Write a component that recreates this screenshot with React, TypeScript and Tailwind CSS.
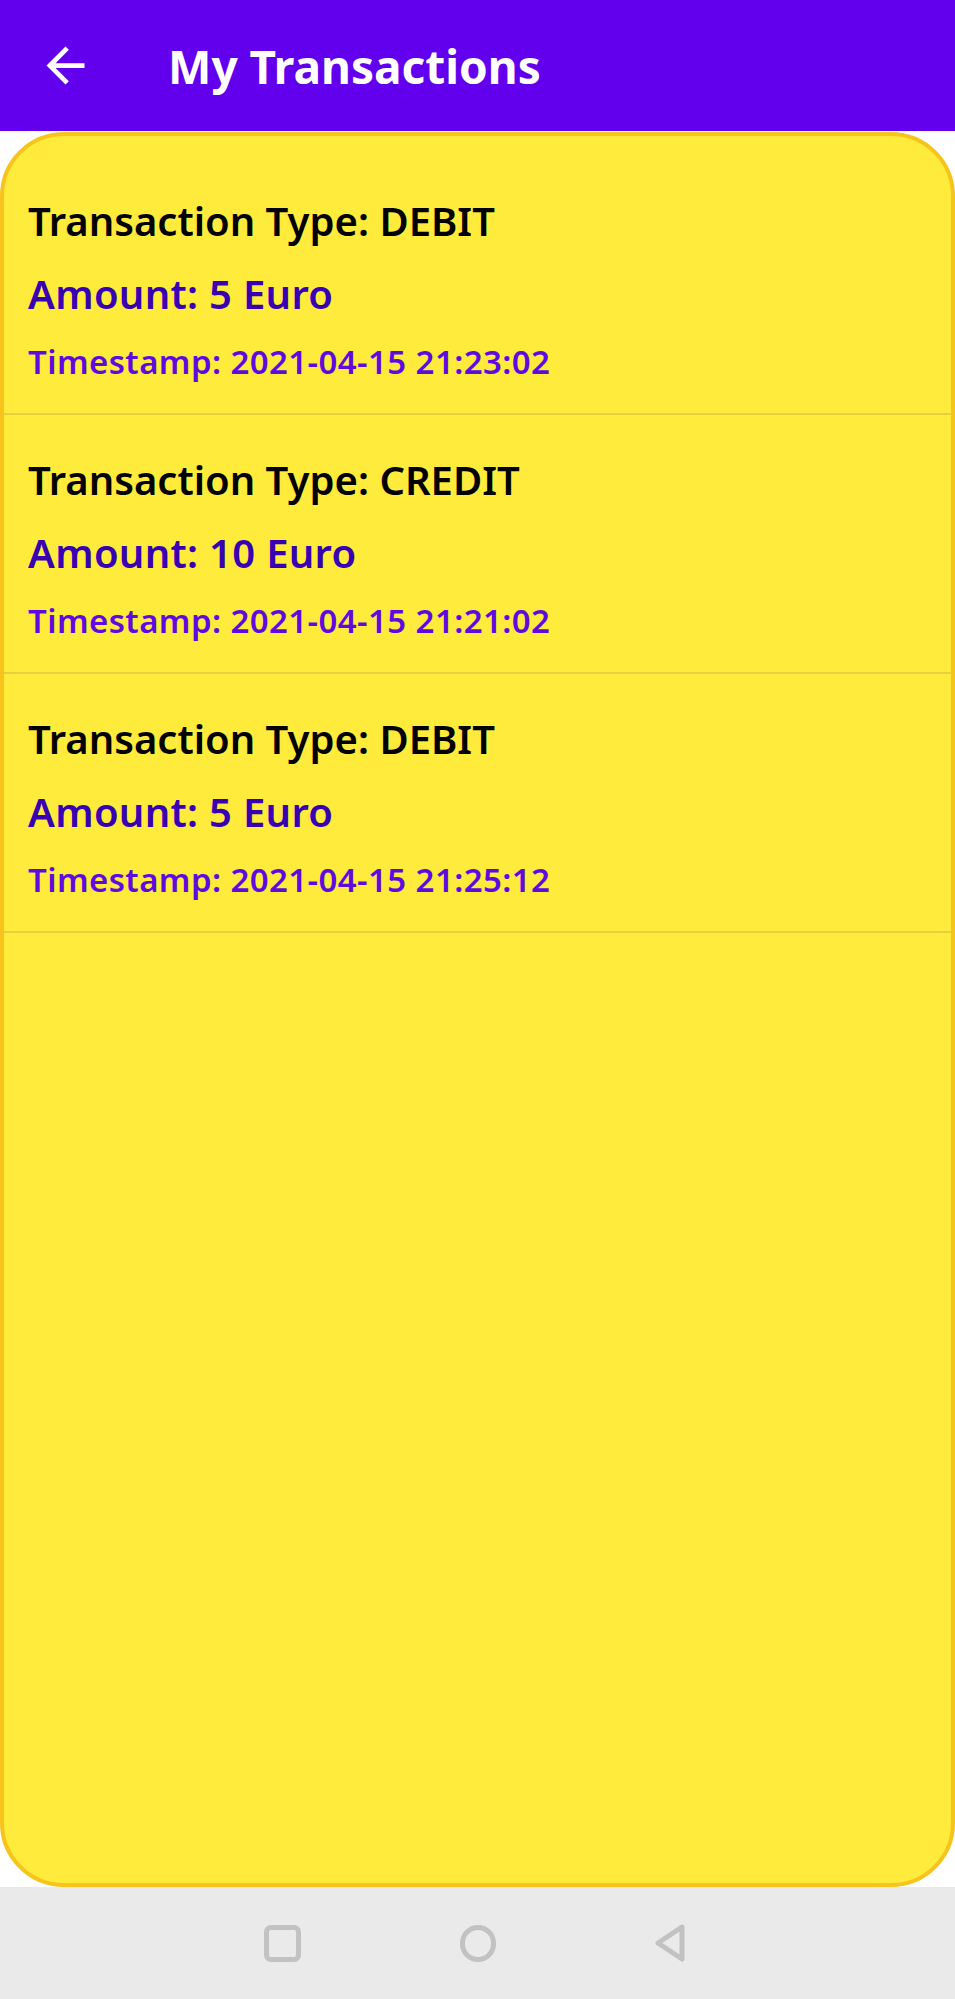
import React from "react";

const rows = [
  { type: "DEBIT", amount: "5 Euro", ts: "2021-04-15 21:23:02" },
  { type: "CREDIT", amount: "10 Euro", ts: "2021-04-15 21:21:02" },
  { type: "DEBIT", amount: "5 Euro", ts: "2021-04-15 21:25:12" },
];

export default function App() {
  return (
    <div
      className="flex h-[1999px] w-[955px] flex-col bg-white"
      style={{ fontFamily: '"Noto Sans", "Open Sans", sans-serif' }}
    >
      <header className="flex h-[131px] shrink-0 items-center bg-[#6200EE]">
        <div className="ml-[37px] flex h-[57px] w-[57px] items-center justify-center">
          <svg viewBox="0 0 24 24" width="57" height="57" fill="#ffffff">
            <path d="M20 11H7.83l5.59-5.59L12 4l-8 8 8 8 1.41-1.41L7.83 13H20v-2z" />
          </svg>
        </div>
        <h1 className="ml-[74px] text-[46px] font-bold leading-none text-white">My Transactions</h1>
      </header>

      <main className="mt-px flex-1 rounded-[64px] border-4 border-[#F6C41A] bg-[#FFEB3B] pt-[20px]">
        {rows.map((r, i) => (
          <div key={i} className="h-[259px] border-b-2 border-[#E6D03C] pl-[24px] pt-[45px]">
            <p className="text-[40px] font-semibold leading-[40px] text-black">
              Transaction Type: {r.type}
            </p>
            <p className="mt-[32px] text-[40px] font-semibold leading-[41px] tracking-[0.3px] text-[#3700B3]">
              Amount: {r.amount}
            </p>
            <p className="mt-[31px] text-[33px] font-semibold leading-[33px] tracking-[0.4px] text-[#5F0BE0]">
              Timestamp: {r.ts}
            </p>
          </div>
        ))}
      </main>

      <nav className="flex h-[112px] shrink-0 items-center bg-[#EAEAEA]">
        <div className="ml-[264px] h-[37px] w-[37px] rounded-[7px] border-[5px] border-[#C2C2C2]" />
        <div className="ml-[159px] h-[37px] w-[36px] rounded-full border-[5px] border-[#C2C2C2]" />
        <svg className="ml-[157px]" width="34" height="38" viewBox="0 0 34 38">
          <path
            d="M29 3 L5 19 L29 35 Z"
            fill="none"
            stroke="#C2C2C2"
            strokeWidth="5"
            strokeLinejoin="round"
          />
        </svg>
      </nav>
    </div>
  );
}
